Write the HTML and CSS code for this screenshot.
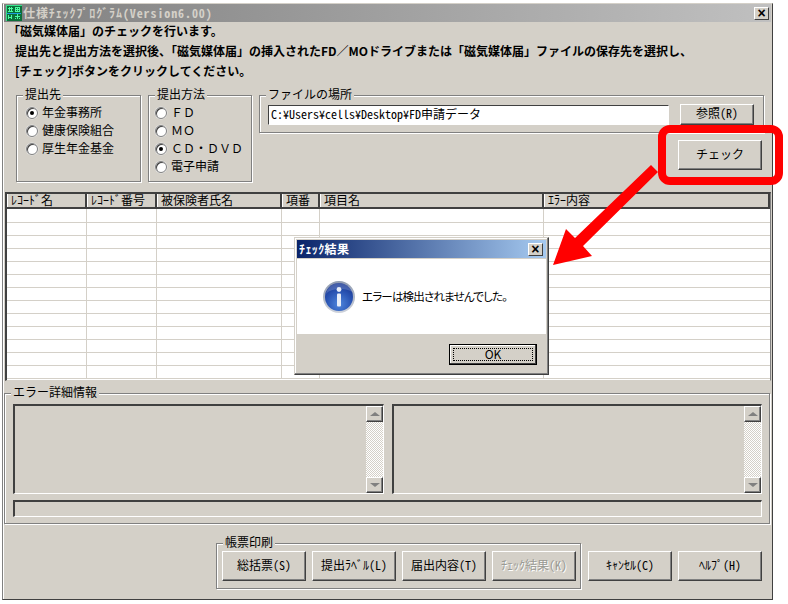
FILE: index.html
```html
<!DOCTYPE html>
<html lang="ja">
<head>
<meta charset="utf-8">
<title>仕様チェックプログラム</title>
<link rel="stylesheet" href="styles.css">
</head>
<body>
<div class="window">
  <div class="titlebar">
    <svg class="app-icon" width="16" height="16" viewBox="0 0 16 16">
      <rect width="16" height="16" fill="#0b6f3a"/>
      <path d="M0 0h16v1H0zM0 0h1v16H0z" fill="#35e08a"/>
      <path d="M2 3h5v1H2zM3 2h1v5H3zM5 2h1v5H5zM2 6h5v1H2zM9 2h5v1H9zM9 2h1v5H9zM11 2h1v5h-1zM13 2h1v5h-1zM9 4h5v1H9zM9 6h5v1H9z" fill="#4dfaa0"/>
      <path d="M2 10h1v4H2zM5 10h1v4H5zM2 12h4v1H2zM9 11h5v1H9zM11 9h1v5h-1zM9 13h1v1H9zM13 13h1v1h-1z" fill="#4dfaa0"/>
      <path d="M1 8h14v1H1z" fill="#1c9be0"/>
    </svg>
    <span class="title-text">仕様ﾁｪｯｸﾌﾟﾛｸﾞﾗﾑ(Version6.00)</span>
    <span class="close">×</span>
  </div>

  <div class="intro">
    <p>「磁気媒体届」のチェックを行います。</p>
    <p class="indent">提出先と提出方法を選択後、「磁気媒体届」の挿入されたFD／MOドライブまたは「磁気媒体届」ファイルの保存先を選択し、</p>
    <p class="indent">[チェック]ボタンをクリックしてください。</p>
  </div>

  <div class="selectors">
    <div class="group dest">
      <span class="group-label">提出先</span>
      <div class="radio-row"><i class="radio on"></i>年金事務所</div>
      <div class="radio-row"><i class="radio"></i>健康保険組合</div>
      <div class="radio-row"><i class="radio"></i>厚生年金基金</div>
    </div>
    <div class="group method">
      <span class="group-label">提出方法</span>
      <div class="radio-row"><i class="radio"></i>ＦＤ</div>
      <div class="radio-row"><i class="radio"></i>ＭＯ</div>
      <div class="radio-row"><i class="radio on"></i>ＣＤ・ＤＶＤ</div>
      <div class="radio-row"><i class="radio"></i>電子申請</div>
    </div>
    <div class="file-col">
      <div class="group file">
        <span class="group-label">ファイルの場所</span>
        <div class="path">C:¥Users¥cells¥Desktop¥FD申請データ</div>
        <div class="btn browse half">参照(R)</div>
      </div>
      <div class="btn check">チェック</div>
    </div>
  </div>

  <div class="grid">
    <div class="grid-row head">
      <div class="c1">ﾚｺｰﾄﾞ名</div><div class="c2">ﾚｺｰﾄﾞ番号</div><div class="c3">被保険者氏名</div><div class="c4">項番</div><div class="c5">項目名</div><div class="c6">ｴﾗｰ内容</div>
    </div>
    <div class="grid-row"><div class="c1"></div><div class="c2"></div><div class="c3"></div><div class="c4"></div><div class="c5"></div><div class="c6"></div></div>
    <div class="grid-row"><div class="c1"></div><div class="c2"></div><div class="c3"></div><div class="c4"></div><div class="c5"></div><div class="c6"></div></div>
    <div class="grid-row"><div class="c1"></div><div class="c2"></div><div class="c3"></div><div class="c4"></div><div class="c5"></div><div class="c6"></div></div>
    <div class="grid-row"><div class="c1"></div><div class="c2"></div><div class="c3"></div><div class="c4"></div><div class="c5"></div><div class="c6"></div></div>
    <div class="grid-row"><div class="c1"></div><div class="c2"></div><div class="c3"></div><div class="c4"></div><div class="c5"></div><div class="c6"></div></div>
    <div class="grid-row"><div class="c1"></div><div class="c2"></div><div class="c3"></div><div class="c4"></div><div class="c5"></div><div class="c6"></div></div>
    <div class="grid-row"><div class="c1"></div><div class="c2"></div><div class="c3"></div><div class="c4"></div><div class="c5"></div><div class="c6"></div></div>
    <div class="grid-row"><div class="c1"></div><div class="c2"></div><div class="c3"></div><div class="c4"></div><div class="c5"></div><div class="c6"></div></div>
    <div class="grid-row"><div class="c1"></div><div class="c2"></div><div class="c3"></div><div class="c4"></div><div class="c5"></div><div class="c6"></div></div>
    <div class="grid-row"><div class="c1"></div><div class="c2"></div><div class="c3"></div><div class="c4"></div><div class="c5"></div><div class="c6"></div></div>
    <div class="grid-row"><div class="c1"></div><div class="c2"></div><div class="c3"></div><div class="c4"></div><div class="c5"></div><div class="c6"></div></div>
    <div class="grid-row"><div class="c1"></div><div class="c2"></div><div class="c3"></div><div class="c4"></div><div class="c5"></div><div class="c6"></div></div>
    <div class="grid-row"><div class="c1"></div><div class="c2"></div><div class="c3"></div><div class="c4"></div><div class="c5"></div><div class="c6"></div></div>
  </div>

  <div class="group errors">
    <span class="group-label">エラー詳細情報</span>
    <div class="panels">
      <div class="panel left"><div class="scroll"><b class="up"></b><b class="track"></b><b class="down"></b></div></div>
      <div class="panel right"><div class="scroll"><b class="up"></b><b class="track"></b><b class="down"></b></div></div>
    </div>
    <div class="status"></div>
  </div>

  <div class="footer">
    <div class="group print">
      <span class="group-label">帳票印刷</span>
      <div class="btn half">総括票(S)</div>
      <div class="btn half">提出ﾗﾍﾞﾙ(L)</div>
      <div class="btn half">届出内容(T)</div>
      <div class="btn half disabled">ﾁｪｯｸ結果(K)</div>
    </div>
    <div class="btn half">ｷｬﾝｾﾙ(C)</div>
    <div class="btn half">ﾍﾙﾌﾟ(H)</div>
  </div>
</div>

<div class="dialog">
  <div class="dialog-title"><span>ﾁｪｯｸ結果</span><span class="close">×</span></div>
  <div class="dialog-body">
    <svg class="info" width="34" height="34" viewBox="0 0 34 34">
      <defs>
        <radialGradient id="blue" cx="0.5" cy="0.75" r="0.8">
          <stop offset="0" stop-color="#4f86dc"/>
          <stop offset="0.55" stop-color="#2a55b4"/>
          <stop offset="1" stop-color="#16318c"/>
        </radialGradient>
        <linearGradient id="ring" x1="0" y1="0" x2="0" y2="1">
          <stop offset="0" stop-color="#8f9bb0"/>
          <stop offset="1" stop-color="#d0d4dc"/>
        </linearGradient>
      </defs>
      <circle cx="17" cy="17" r="16" fill="url(#ring)"/>
      <circle cx="17" cy="17" r="14" fill="url(#blue)"/>
      <path d="M4 14C8 8 26 7 31 13C29 6 23 3 17 3C10 3 5 8 4 14Z" fill="#fff" opacity=".18"/>
      <circle cx="17" cy="9.5" r="2.4" fill="#e8eef8"/>
      <rect x="15" y="13.5" width="4" height="13" rx="1" fill="#e8eef8"/>
    </svg>
    <span class="message">エラーは検出されませんでした。</span>
  </div>
  <div class="dialog-foot"><div class="ok"><span>OK</span></div></div>
</div>

<div class="callout"></div>
<svg class="arrow" width="788" height="604" viewBox="0 0 788 604">
  <polygon points="553,265 566,229 575,238 651,165 658,172 583,246 592,256" fill="#f00"/>
</svg>
</body>
</html>
```

FILE: styles.css
```css
* { box-sizing: border-box; }
html, body { margin: 0; padding: 0; }
body {
  position: relative;
  width: 788px;
  height: 604px;
  overflow: hidden;
  background: #fff;
  color: #000;
  font: 12px/14px "Noto Sans CJK JP", sans-serif;
}
p { margin: 0; }
.half, .path, .grid-row.head, .title-text, .dialog-title { font-feature-settings: "hwid"; }

.window {
  width: 771px;
  height: 597px;
  margin: 3px 0 0 2px;
  padding: 0 1px 0 1px;
  background: #d4d0c8;
  border: 1px solid #808080;
  border-right-color: #404040;
  border-bottom-color: #404040;
  border-top-color: #d4d0c8;
  box-shadow: inset 1px 0 0 #fff;
}

.titlebar {
  display: flex;
  align-items: center;
  height: 18px;
  padding: 0 2px;
  background: linear-gradient(to right, #808080, #c0c0c0);
  color: #d4d0c8;
  font-weight: 700;
}
.app-icon { flex: none; }
.title-text { margin-left: 1px; letter-spacing: .9px; }
.close {
  display: flex;
  align-items: center;
  justify-content: center;
  width: 15px;
  height: 13px;
  margin-left: auto;
  background: #d4d0c8;
  border: 1px solid;
  border-color: #fff #404040 #404040 #fff;
  color: #000;
  font: 700 14px/10px "Liberation Sans", sans-serif;
}

.intro { padding-left: 4px; font-weight: 700; line-height: 20px; height: 60px; position: relative; top: -1px; }
.indent { padding-left: 7px; white-space: nowrap; }

.group {
  position: relative;
  border: 1px solid #808080;
  box-shadow: 1px 1px 0 #fff, inset 1px 1px 0 #fff;
}
.group-label {
  position: absolute;
  top: -8px;
  left: 6px;
  height: 12px;
  padding: 0 2px;
  background: #d4d0c8;
  line-height: 11px;
  white-space: nowrap;
}

.selectors {
  display: flex;
  gap: 7px;
  margin-top: 13px;
  padding-left: 12px;
  align-items: flex-start;
}
.dest { width: 125px; height: 87px; padding: 8px 0 0 9px; }
.method { width: 104px; height: 87px; padding: 8px 0 0 6px; }
.radio-row { display: flex; align-items: center; height: 18px; padding-bottom: 2px; gap: 4px; white-space: nowrap; }
.radio {
  flex: none;
  position: relative;
  width: 12px;
  height: 12px;
  margin-top: 2px;
  border-radius: 50%;
  background: #fff;
  border: 1px solid #808080;
  box-shadow: inset 1px 1px 0 #404040, 0 0 0 .5px #e8e8e8;
}
.radio.on::after {
  content: "";
  position: absolute;
  left: 3px;
  top: 3px;
  width: 4px;
  height: 4px;
  border-radius: 50%;
  background: #000;
}
.file-col { display: flex; flex-direction: column; width: 505px; }
.file {
  display: flex;
  align-items: flex-start;
  height: 38px;
  padding: 8px 0 0 8px;
}
.path {
  width: 401px;
  height: 20px;
  margin-top: 1px;
  padding-left: 2px;
  background: #fff;
  border: 1px solid;
  border-color: #404040 #fff #fff #404040;
  line-height: 15px;
  white-space: nowrap;
}
.btn {
  display: flex;
  align-items: center;
  justify-content: center;
  width: 84px;
  height: 30px;
  padding-bottom: 3px;
  background: #d4d0c8;
  border: 1px solid;
  border-color: #fff #404040 #404040 #fff;
  box-shadow: inset -1px -1px 0 #808080;
  white-space: nowrap;
}
.browse { width: 74px; height: 21px; margin-left: 11px; }
.check { align-self: flex-end; margin: 7px 2px 0 0; }
.disabled { color: #9a9a94; text-shadow: 1px 1px 0 #fff; }

.grid {
  width: 766px;
  height: 189px;
  margin: 10px 0 0 1px;
  overflow: hidden;
  background: #fff;
  border-top: 2px solid #404040;
  border-left: 2px solid #404040;
  border-right: 1px solid #808080;
  border-bottom: 1px solid #d4d0c8;
}
.grid-row {
  display: grid;
  grid-template-columns: 80px 70px 125px 38px 224px 1fr;
  height: 13px;
}
.grid-row > div { border-right: 1px solid #d4d0c8; border-bottom: 1px solid #d4d0c8; }
.grid-row > div.c6 { border-right: 0; }
.grid-row.head { height: 15px; }
.grid-row.head + .grid-row { height: 14px; }
.grid-row.head > div {
  padding-left: 4px;
  background: #d4d0c8;
  border-right: 2px solid #404040;
  border-bottom: 2px solid #404040;
  box-shadow: inset 1px 0 0 #fff;
  line-height: 11px;
  white-space: nowrap;
}

.errors {
  width: 766px;
  height: 131px;
  margin-top: 12px;
  padding: 10px 7px 0 8px;
}
.panels { display: flex; gap: 8px; height: 90px; }
.panel {
  display: flex;
  justify-content: flex-end;
  width: 371px;
  border: 1px solid;
  border-width: 2px 1px 1px 2px;
  border-color: #404040 #fff #fff #404040;
}
.panel.right { width: 370px; }
.scroll { display: flex; flex-direction: column; width: 17px; }
.scroll b { display: block; }
.up, .down {
  position: relative;
  flex: none;
  height: 16px;
  background: #d4d0c8;
  border: 1px solid;
  border-color: #fff #404040 #404040 #fff;
  box-shadow: inset -1px -1px 0 #808080;
}
.up::after, .down::after {
  content: "";
  position: absolute;
  left: 3px;
  width: 0;
  height: 0;
  border-left: 5px solid transparent;
  border-right: 5px solid transparent;
}
.up::after { top: 5px; border-bottom: 4px solid #808080; }
.down::after { top: 5px; border-top: 4px solid #808080; }
.track {
  flex: 1;
  background: repeating-conic-gradient(#fff 0 25%, #d4d0c8 0 50%) 0 0 / 2px 2px;
}
.status {
  width: 749px;
  height: 17px;
  margin-top: 6px;
  border: 1px solid;
  border-width: 2px 1px 1px 2px;
  border-color: #404040 #fff #fff #404040;
}

.footer {
  display: flex;
  align-items: flex-end;
  gap: 6px;
  margin-top: 19px;
  padding-left: 212px;
}
.print {
  display: flex;
  gap: 6px;
  width: 365px;
  height: 46px;
  margin-right: 1px;
  padding: 7px 0 0 5px;
  align-self: flex-start;
}
.footer > .btn { margin-bottom: 8px; }

.dialog {
  position: absolute;
  left: 294px;
  top: 237px;
  width: 255px;
  height: 138px;
  padding: 2px;
  background: #d4d0c8;
  border: 1px solid;
  border-color: #d4d0c8 #404040 #404040 #d4d0c8;
  box-shadow: inset -1px -1px 0 #808080, inset 1px 1px 0 #fff;
}
.dialog-title {
  display: flex;
  align-items: center;
  height: 18px;
  padding: 0 3px 0 2px;
  background: linear-gradient(to right, #0a246a, #a6caf0);
  color: #fff;
  font-weight: 700;
  letter-spacing: .4px;
}
.dialog-body {
  display: flex;
  align-items: center;
  height: 75px;
  margin-top: 1px;
  padding-left: 25px;
  background: #fff;
}
.info { flex: none; }
.message {
  margin: -2px 0 0 6px;
  font-size: 11.5px;
  font-feature-settings: "palt";
  letter-spacing: -.8px;
  white-space: nowrap;
}
.dialog-foot { display: flex; justify-content: flex-end; padding: 10px 9px 0 0; }
.ok {
  width: 88px;
  height: 21px;
  padding: 3px;
  background: #d4d0c8;
  border: 1px solid #000;
  box-shadow: inset -1px -1px 0 #404040, inset 1px 1px 0 #fff;
}
.ok span {
  display: block;
  height: 100%;
  border: 1px dotted #000;
  text-align: center;
  line-height: 9px;
}

.callout {
  position: absolute;
  left: 658px;
  top: 125px;
  width: 125px;
  height: 60px;
  border: 8px solid #f00;
  border-radius: 12px;
}
.arrow { position: absolute; left: 0; top: 0; pointer-events: none; }
```
